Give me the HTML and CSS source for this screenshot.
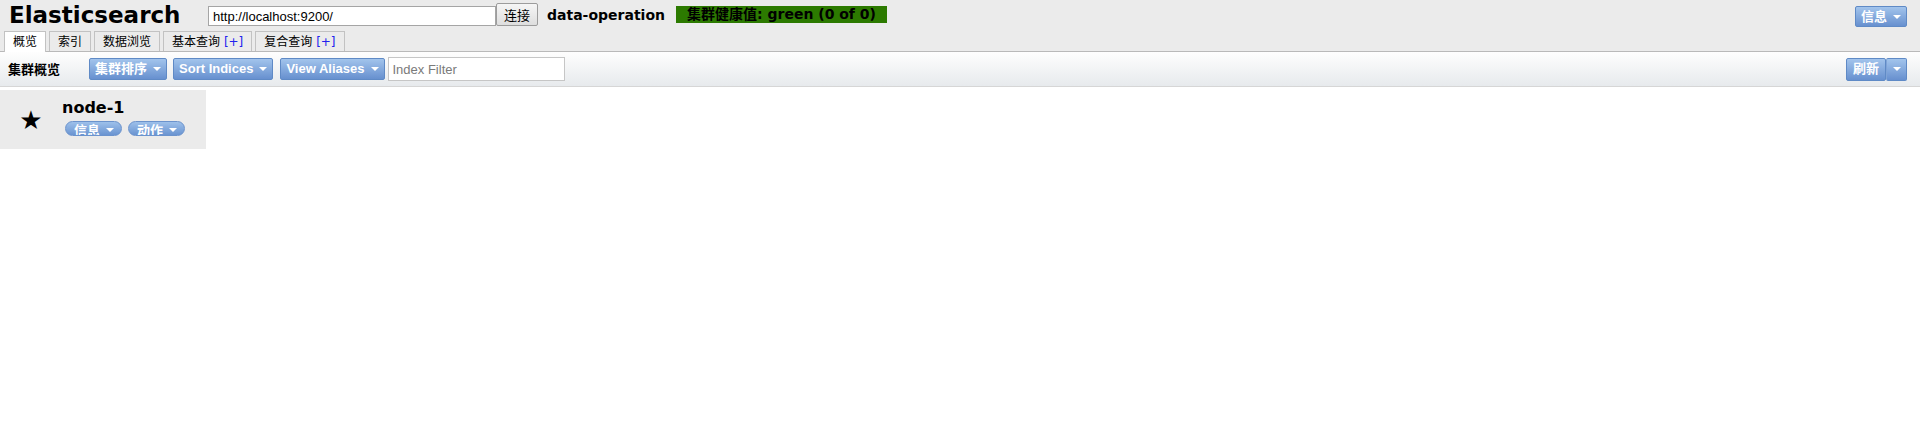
FILE: index.html
```html
<!DOCTYPE html>
<html lang="zh">
<head>
<meta charset="utf-8">
<title>Elasticsearch</title>
<link rel="stylesheet" href="styles.css">
</head>
<body>
<div class="header">
  <div class="top">
    <h1 class="title">Elasticsearch</h1>
    <input class="url" type="text" value="http://localhost:9200/">
    <button class="connect">连接</button>
    <span class="cluster-name">data-operation</span>
    <span class="health">集群健康值: green (0 of 0)</span>
    <span class="btn btn-info">信息<i class="caret"></i></span>
  </div>
  <div class="tabs">
    <span class="tab active">概览</span>
    <span class="tab">索引</span>
    <span class="tab">数据浏览</span>
    <span class="tab">基本查询 <span class="plus">[+]</span></span>
    <span class="tab">复合查询 <span class="plus">[+]</span></span>
  </div>
</div>
<div class="toolbar">
  <h2 class="tool-title">集群概览</h2>
  <div class="tool-buttons">
    <span class="btn">集群排序<i class="caret"></i></span>
    <span class="btn">Sort Indices<i class="caret"></i></span>
    <span class="btn">View Aliases<i class="caret"></i></span>
    <input class="filter" type="text" placeholder="Index Filter">
  </div>
  <span class="split">
    <span class="btn split-main">刷新</span><span class="btn split-caret"><i class="caret"></i></span>
  </span>
</div>
<div class="node">
  <div class="star">★</div>
  <div class="node-info">
    <div class="node-name">node-1</div>
    <div class="pills">
      <span class="pill">信息<i class="caret"></i></span>
      <span class="pill">动作<i class="caret"></i></span>
    </div>
  </div>
</div>
</body>
</html>
```

FILE: styles.css
```css
* { box-sizing: border-box; }
body {
  margin: 0;
  background: #fff;
  font-family: "DejaVu Sans", "Noto Sans CJK SC", sans-serif;
  color: #000;
}
.header {
  background: #ebebeb;
}
.top {
  display: flex;
  align-items: flex-start;
  height: 31px;
}
.title {
  margin: 1px 0 0 9px;
  width: 199px;
  font: bold 23px/28px "DejaVu Sans", sans-serif;
}
.url {
  margin: 6px 0 0 0;
  width: 288px;
  height: 20px;
  padding: 0 4px;
  border: 1px solid #a5a5a5;
  background: #fff;
  font: 13px "Liberation Sans", "Noto Sans CJK SC", sans-serif;
  color: #000;
  outline: none;
}
.connect {
  margin: 3px 0 0 0;
  width: 42px;
  height: 23px;
  padding: 0;
  border: 1px solid #9c9c9c;
  border-radius: 2px;
  background: linear-gradient(#f6f6f6, #dedede);
  font: 13px "Liberation Sans", "Noto Sans CJK SC", sans-serif;
  color: #000;
}
.cluster-name {
  margin: 7px 0 0 9px;
  width: 129px;
  font: bold 14px/17px "DejaVu Sans", "Noto Sans CJK SC", sans-serif;
}
.health {
  margin-top: 6px;
  height: 17px;
  padding: 0 11px;
  background: #2c7a00;
  font: bold 14px/17px "DejaVu Sans", "Noto Sans CJK SC", sans-serif;
  color: #000;
  white-space: nowrap;
}
.btn {
  display: inline-flex;
  align-items: center;
  gap: 6px;
  height: 22px;
  padding: 0 5px;
  border: 1px solid #5f8ac6;
  border-radius: 2px;
  background: linear-gradient(#a2c4ec, #6790cf);
  color: #fff;
  font: bold 13px/20px "Liberation Sans", "Noto Sans CJK SC", sans-serif;
  white-space: nowrap;
}
.btn-info {
  margin: 6px 13px 0 auto;
  height: 21px;
}
.caret {
  display: inline-block;
  width: 0;
  height: 0;
  border-left: 4px solid transparent;
  border-right: 4px solid transparent;
  border-top: 4px solid #fff;
}
.tabs {
  display: flex;
  gap: 3px;
  padding-left: 4px;
  height: 21px;
  border-bottom: 1px solid #b9b9b9;
}
.tab {
  height: 20px;
  padding: 0 8px;
  border: 1px solid #c2c2c2;
  border-bottom: none;
  background: #ebebeb;
  font: 12px/20px "DejaVu Sans", "Noto Sans CJK SC", sans-serif;
  white-space: nowrap;
}
.tab.active {
  height: 21px;
  background: #fff;
  position: relative;
  z-index: 1;
}
.plus {
  color: #2222ee;
}
.toolbar {
  display: flex;
  align-items: center;
  height: 35px;
  padding-left: 8px;
  background: linear-gradient(#fefefe, #e7eaed);
  border-bottom: 1px solid #d6d6d6;
}
.tool-title {
  margin: 0;
  width: 81px;
  font: bold 13px/20px "Noto Sans CJK SC", sans-serif;
}
.tool-buttons {
  display: flex;
  align-items: center;
  gap: 6px;
}
.tool-buttons .btn:nth-child(3) {
  margin-left: 1px;
}
.filter {
  margin-left: -3px;
  width: 177px;
  height: 24px;
  padding: 0 4px;
  border: 1px solid #c6c6c6;
  background: #fff;
  font: 13px "Liberation Sans", sans-serif;
  outline: none;
}
.filter::placeholder {
  color: #7a7a7a;
}
.split {
  display: flex;
  margin: 0 13px 0 auto;
}
.split .btn {
  height: 23px;
}
.split-main {
  padding: 0 6px;
}
.split-caret {
  width: 21px;
  justify-content: center;
  border-left-color: #7fa3d6;
}
.node {
  display: flex;
  margin-top: 3px;
  width: 206px;
  height: 59px;
  background: #ebebeb;
}
.star {
  width: 62px;
  text-align: center;
  padding-top: 16px;
  font: 26px/28px "DejaVu Sans", sans-serif;
}
.node-info {
  padding-top: 9px;
}
.node-name {
  font: bold 16px/18px "DejaVu Sans", sans-serif;
}
.pills {
  display: flex;
  gap: 6px;
  margin: 4px 0 0 3px;
}
.pill {
  display: inline-flex;
  align-items: flex-start;
  gap: 6px;
  height: 15px;
  padding: 0 7px 0 8px;
  border: 1px solid #6b93cd;
  border-radius: 8px;
  background: linear-gradient(#9dc0ea, #6a94d1);
  color: #fff;
  overflow: hidden;
  font: bold 13px/15px "Noto Sans CJK SC", sans-serif;
}
.pill .caret {
  margin-top: 6px;
}
```
